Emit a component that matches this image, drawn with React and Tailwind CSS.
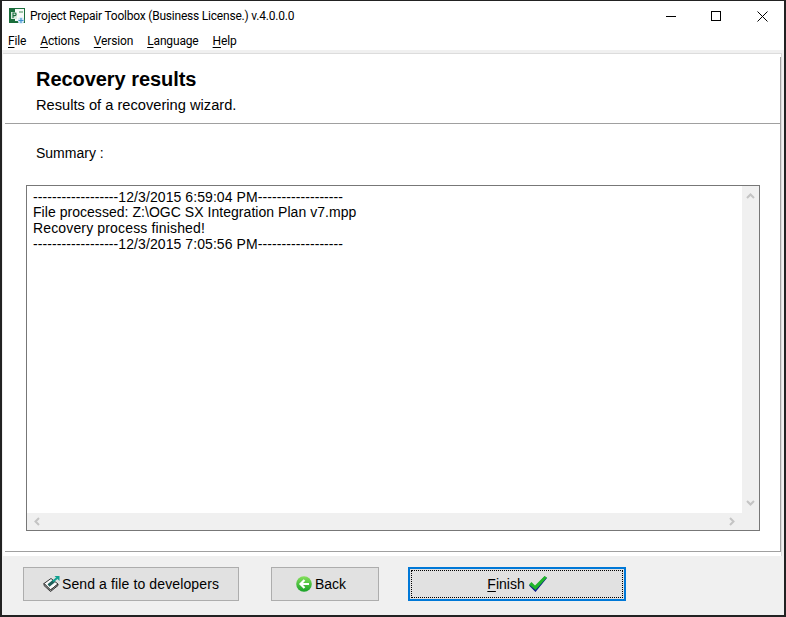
const arial = { fontFamily: '"Liberation Sans", Arial, sans-serif' };
const uiFont = { fontFamily: 'Roboto, sans-serif' };

const AppIcon = () => (
  <svg width="16" height="16" viewBox="0 0 16 16" className="shrink-0">
    <rect x="0" y="0" width="16" height="15" fill="#1b6e3c" />
    <rect x="6" y="1" width="9" height="12" fill="#f7faf8" />
    <rect x="2" y="4" width="6" height="7" fill="#d8e8dd" />
    <path d="M4 10V5h1.800a1.200 1.200 0 0 1 0 2.600H4" fill="none" stroke="#1b6e3c" strokeWidth="1.100" />
    <rect x="10" y="3" width="4" height="2" fill="#9cc4a8" />
    <circle cx="12" cy="12.500" r="3.200" fill="#d4e8f7" />
    <path d="M9.500 12.500h5M12 10v5" stroke="#3d8fd1" strokeWidth="1.100" />
  </svg>
);

const MenuItem = ({ letter, rest }) => (
  <span className="tracking-[-0.15px]">
    <span className="underline underline-offset-2">{letter}</span>
    {rest}
  </span>
);

const SendIcon = () => (
  <svg width="18" height="18" viewBox="0 0 18 18" className="shrink-0">
    <path d="M1 8.500 8 3.500l7 5.500-7.500 6z" fill="#fafafa" stroke="#333" strokeWidth="1" />
    <path d="M1 8.500v2l6.500 6 7.500-6V9l-7.500 6z" fill="#b8b8b8" stroke="#333" strokeWidth="1" />
    <path d="M5.500 10.500 11 6" stroke="#1f5f5a" strokeWidth="3" />
    <path d="M10 6.500 14 3" stroke="#10a090" strokeWidth="2" />
    <path d="M11.500 1h5v5z" fill="#10a090" />
  </svg>
);

const BackIcon = () => (
  <svg width="16" height="16" viewBox="0 0 16 16" className="shrink-0">
    <defs>
      <linearGradient id="backFill" x1="0" y1="0" x2="0" y2="1">
        <stop offset="0" stopColor="#86e05c" />
        <stop offset="1" stopColor="#17a127" />
      </linearGradient>
    </defs>
    <circle cx="8" cy="8" r="7.800" fill="url(#backFill)" />
    <path d="M13 8H5M8.500 4 4.500 8l4 4" fill="none" stroke="#fff" strokeWidth="2.200" />
  </svg>
);

const CheckIcon = () => (
  <svg width="18" height="16" viewBox="0 0 18 16" className="shrink-0">
    <path d="M0 9.500 2.500 7.500 6 11 15.500 0.500 18 2 6.500 16z" fill="#0a1f8a" />
    <path d="M0 8.500 2.500 6 6 9.500 15.500 0 18 1.500 6.500 14z" fill="#1fb52b" />
  </svg>
);

const Chevron = ({ d }) => (
  <svg width="9" height="9" viewBox="0 0 9 9">
    <path d={d} fill="none" stroke="#c4c4c4" strokeWidth="2" />
  </svg>
);

export default function App() {
  return (
    <div className="w-[786px] h-[617px] bg-[#f0f0f0] border-x-2 border-b-2 border-t border-[#222] flex flex-col text-black overflow-hidden" style={arial}>
      {/* Title bar */}
      <div className="h-[30px] shrink-0 bg-white flex items-center pl-[7px] text-[12px]" style={uiFont}>
        <AppIcon />
        <span className="ml-[5px] leading-none tracking-[-0.21px]">Project Repair Toolbox (Business License.) v.4.0.0.0</span>
        <div className="ml-auto flex items-center h-full">
          <div className="w-[42px] flex justify-center">
            <div className="w-[10px] h-px bg-black" />
          </div>
          <div className="w-[48px] flex justify-center">
            <div className="w-[10px] h-[10px] border border-black" />
          </div>
          <div className="w-[44px] flex justify-center">
            <svg width="11" height="11" viewBox="0 0 11 11">
              <path d="M.5.500l10 10M10.500.500l-10 10" stroke="#000" strokeWidth="1" />
            </svg>
          </div>
        </div>
      </div>

      {/* Menu */}
      <div className="h-[19px] shrink-0 bg-white flex items-center gap-[14px] pl-[6px] text-[12px]" style={uiFont}>
        <MenuItem letter="F" rest="ile" />
        <MenuItem letter="A" rest="ctions" />
        <MenuItem letter="V" rest="ersion" />
        <MenuItem letter="L" rest="anguage" />
        <MenuItem letter="H" rest="elp" />
      </div>
      <div className="h-[3px] shrink-0 bg-[#f0f0f0]" />

      {/* Wizard page */}
      <div className="flex-1 min-h-0 mr-[2px] ml-[1px] bg-white border-t border-r border-[#dcdcdc] flex flex-col">
        <div className="flex-1 min-h-0 mt-[3px] ml-[2px] mb-[4px] border-r border-b border-[#a0a0a0] flex flex-col">
          <div className="h-[67px] shrink-0 pl-[31px] pt-[10px] border-b border-[#a0a0a0]">
            <h1 className="text-[20px] leading-[24px] font-bold tracking-[-0.05px]">Recovery results</h1>
            <p className="text-[14.67px] leading-[17px] mt-[6px]">Results of a recovering wizard.</p>
          </div>
          <p className="text-[14px] leading-[16px] pl-[31px] mt-[21px]">Summary :</p>

          <div className="mt-[24px] ml-[21px] mr-[20px] flex-1 min-h-0 mb-[20px] border border-[#777] grid grid-cols-[1fr_17px] grid-rows-[1fr_17px]">
            <div className="bg-white px-[6px] pt-[3px] text-[14px] leading-[16px] whitespace-pre">
              <div className="tracking-[0.08px]">------------------12/3/2015 6:59:04 PM------------------</div>
              <div className="tracking-[0.04px] -mt-px">File processed: Z:\OGC SX Integration Plan v7.mpp</div>
              <div className="tracking-[0.15px]">Recovery process finished!</div>
              <div className="tracking-[0.08px]">------------------12/3/2015 7:05:56 PM------------------</div>
            </div>
            <div className="bg-[#f0f0f0] flex flex-col items-center justify-between py-[6px]">
              <Chevron d="M1 6l3.500-3.500L8 6" />
              <Chevron d="M1 3l3.500 3.500L8 3" />
            </div>
            <div className="bg-[#f0f0f0] flex items-center justify-between px-[6px]">
              <Chevron d="M6 1 2.500 4.500 6 8" />
              <Chevron d="M3 1l3.500 3.500L3 8" />
            </div>
            <div className="bg-[#f0f0f0]" />
          </div>
        </div>
      </div>

      {/* Footer buttons */}
      <div className="h-[59px] shrink-0 bg-[#f0f0f0] pt-[11px] pl-[21px] flex items-start text-[14px]">
        <button className="w-[216px] h-[34px] bg-[#e1e1e1] border border-[#adadad] flex items-center justify-center gap-[1px]">
          <SendIcon />
          <span className="tracking-[0.12px]">Send a file to developers</span>
        </button>
        <button className="ml-[32px] w-[108px] h-[34px] bg-[#e1e1e1] border border-[#adadad] flex items-center pl-[24px] gap-[3px]">
          <BackIcon />
          <span>Back</span>
        </button>
        <button className="ml-[29px] w-[218px] h-[34px] bg-[#e1e1e1] border-2 border-[#0078d7] p-px">
          <span className="w-full h-full border border-dotted border-black flex items-center justify-center gap-[4px]">
            <span>
              <span className="underline underline-offset-2">F</span>inish
            </span>
            <CheckIcon />
          </span>
        </button>
      </div>
    </div>
  );
}
